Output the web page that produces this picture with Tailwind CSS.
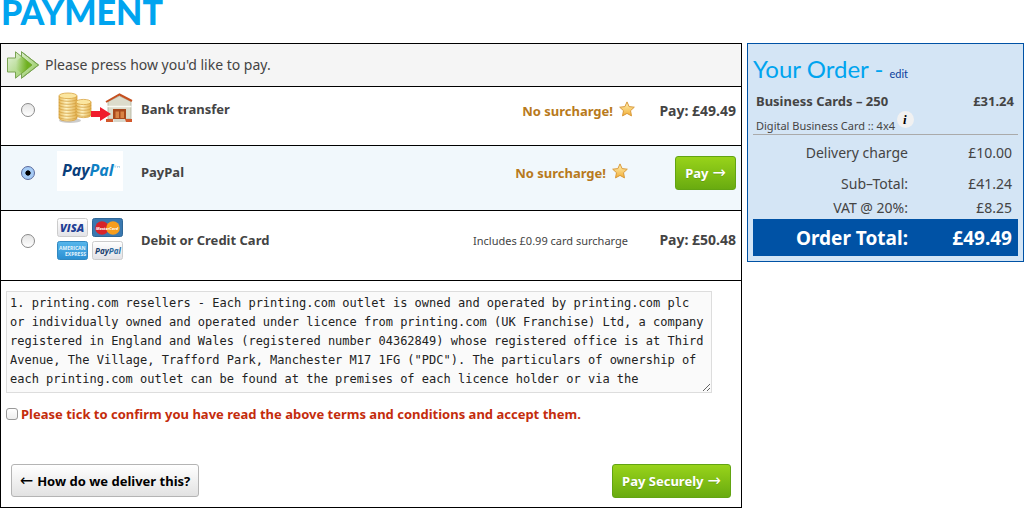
<!DOCTYPE html>
<html lang="en">
<head>
    <meta charset="UTF-8">
    <meta name="viewport" content="width=device-width, initial-scale=1.0">
    <title>Payment</title>
    <script src="https://cdn.jsdelivr.net/npm/@tailwindcss/browser@4"></script>
</head>
<body class="bg-white font-['Noto_Sans',sans-serif] text-[13px] leading-5 text-[#444]">
    <svg class="absolute w-0 h-0">
        <defs>
            <linearGradient id="gold" x1="0" y1="0" x2="0" y2="1">
                <stop offset="0" stop-color="#fff3b8"/>
                <stop offset="1" stop-color="#f2ae35"/>
            </linearGradient>
            <symbol id="star" viewBox="0 0 16 16">
                <path d="M8 .9l2.1 4.700 5.200.6-3.800 3.500 1 5.200L8 12.400l-4.500 2.500 1-5.200L.7 6.200l5.200-.6z" fill="url(#gold)" stroke="#d99a3c" stroke-width="1" stroke-linejoin="round"/>
            </symbol>
        </defs>
    </svg>

    <h1 class="h-[43px] pl-px text-[34px] leading-6 font-black text-[#00a4ef] font-['Lato',sans-serif]">PAYMENT</h1>

    <div class="flex items-start gap-[5px]">
        <form class="flex-1 border border-black">
            <div class="flex items-center h-[42px] pl-[6px] gap-[6px] bg-[#f5f5f5]">
                <svg class="w-8 h-7" viewBox="0 0 32 28">
                    <defs>
                        <linearGradient id="arrowA" x1="0" y1="0" x2="1" y2="1">
                            <stop offset="0" stop-color="#e6f3dc"/>
                            <stop offset="1" stop-color="#8cc653"/>
                        </linearGradient>
                        <linearGradient id="arrowB" x1="0" y1="0" x2="1" y2="0">
                            <stop offset="0" stop-color="#7ab82e" stop-opacity="0"/>
                            <stop offset=".7" stop-color="#6fb01f"/>
                        </linearGradient>
                    </defs>
                    <path d="M14.500 .8L31.500 14 14.500 27.200v-6h-5v-14h5z" fill="url(#arrowA)" stroke="#7aa353"/>
                    <path d="M.5 7h8V.8L25 14 8.500 27.200V21H.5z" fill="url(#arrowA)" stroke="#7aa353"/>
                    <path d="M9 10l6-4.500L25 14l-10 8.500L9 18z" fill="url(#arrowB)"/>
                    <path d="M14.500 5.500V.8L31.500 14 14.500 27.200v-4.700" fill="none" stroke="#7aa353"/>
                </svg>
                <span class="text-sm">Please press how you'd like to pay.</span>
            </div>

            <div class="flex items-start h-[59px] border-t border-black pl-5 pr-[5px]">
                <input type="radio" name="method" id="bank" class="appearance-none mt-4 w-[14px] h-[14px] rounded-full border border-[#8a8a8a] bg-linear-to-b from-[#e4e4e4] to-white">
                <label for="bank" class="flex flex-1 ml-[22px]">
                    <svg class="w-[77px] h-8 mt-[5px]" viewBox="0 0 77 32">
                        <defs>
                            <linearGradient id="coin" x1="0" x2="1">
                                <stop offset="0" stop-color="#e6b95a"/>
                                <stop offset=".4" stop-color="#fff4c4"/>
                                <stop offset="1" stop-color="#e2b04c"/>
                            </linearGradient>
                        </defs>
                        <ellipse cx="13" cy="28.500" rx="11" ry="2.500" fill="#ccc"/>
                        <path d="M2 4v22c0 4 18 4 18 0V4z" fill="url(#coin)" stroke="#d9a444" stroke-width=".8"/>
                        <path d="M2 7c0 3 18 3 18 0M2 10c0 3 18 3 18 0M2 13c0 3 18 3 18 0M2 16c0 3 18 3 18 0M2 19c0 3 18 3 18 0M2 22c0 3 18 3 18 0M2 25c0 3 18 3 18 0" fill="none" stroke="#d3a040" stroke-width=".8"/>
                        <ellipse cx="11" cy="3.800" rx="9" ry="2.800" fill="#fbe6a0" stroke="#d9a444" stroke-width=".8"/>
                        <path d="M19 10v13c0 3.500 15 3.500 15 0V10z" fill="url(#coin)" stroke="#d9a444" stroke-width=".8"/>
                        <path d="M19 13c0 3 15 3 15 0M19 16c0 3 15 3 15 0M19 19c0 3 15 3 15 0M19 22c0 3 15 3 15 0" fill="none" stroke="#d3a040" stroke-width=".8"/>
                        <ellipse cx="26.500" cy="10" rx="7.500" ry="2.600" fill="#fbe6a0" stroke="#d9a444" stroke-width=".8"/>
                        <path d="M51 9.500L62.500 4 74 9.500V27H51z" fill="#dcdccb" stroke="#aeae9c" stroke-width=".8"/>
                        <path d="M49.500 14.500h25" stroke="#fafaf2" stroke-width="1.500"/>
                        <path d="M49 10l13.500-7.500L75 9" fill="none" stroke="#c5501f" stroke-width="2"/>
                        <path d="M49 27h7v3h-7zM68 27h7v3h-7z" fill="#d2582c"/>
                        <path d="M56 17h13v10H56z" fill="#a8481c"/>
                        <path d="M58.500 19.500h3.500v6.500h-3.500zM63.500 19.500h3.500v6.500h-3.500z" fill="#d98345"/>
                        <path d="M57 27h11l1 3H56z" fill="#d8d8cc"/>
                        <path d="M34 19h9v-4l11 7-11 7v-4h-9z" fill="#f01c2c"/>
                    </svg>
                    <span class="mt-3 ml-[7px] font-bold">Bank transfer</span>
                </label>
                <span class="flex items-start gap-[6px] mt-[14px] font-bold text-[#b87a1c]">No surcharge! <svg class="w-4 h-4"><use href="#star"/></svg></span>
                <span class="w-[101px] mt-[14px] text-right text-sm leading-5 font-bold">Pay: £49.49</span>
            </div>

            <div class="flex items-start h-[65px] border-t border-black pl-5 pr-[5px] bg-[#f1f8fc]">
                <input type="radio" name="method" id="paypal" checked class="appearance-none mt-5 w-[14px] h-[14px] rounded-full border border-[#5a6a9c] bg-radial from-black from-25% to-[#a5cbf5] to-35%">
                <label for="paypal" class="flex flex-1 ml-[22px]">
                    <svg class="w-[66px] h-10 mt-[5px] bg-white font-['Open_Sans',sans-serif]" viewBox="0 0 66 40">
                        <text x="5" y="25" font-size="16" font-weight="700" font-style="italic" fill="#0a3f7c">Pay<tspan fill="#0f80c4">Pal</tspan></text>
                        <path d="M57 15h2.500M58.200 15v2M60.500 17v-2l1 1 1-1v2" fill="none" stroke="#7fb8dd" stroke-width=".5"/>
                    </svg>
                    <span class="mt-4 ml-[18px] font-bold">PayPal</span>
                </label>
                <span class="flex items-start gap-[6px] mt-[17px] font-bold text-[#b87a1c]">No surcharge! <svg class="w-4 h-4"><use href="#star"/></svg></span>
                <span class="flex justify-end w-[108px] mt-[10px]">
                    <button type="button" class="flex items-center justify-center gap-1 w-[61px] h-[34px] rounded-[3px] border border-[#62a412] bg-linear-to-b from-[#98d31a] to-[#69ab10] font-bold text-white text-shadow-2xs whitespace-nowrap">Pay <span class="font-['DejaVu_Sans',sans-serif] text-base font-normal">→</span></button>
                </span>
            </div>

            <div class="flex items-start h-[70px] border-t border-black pl-5 pr-[5px]">
                <input type="radio" name="method" id="card" class="appearance-none mt-[23px] w-[14px] h-[14px] rounded-full border border-[#8a8a8a] bg-linear-to-b from-[#e4e4e4] to-white">
                <label for="card" class="flex flex-1 ml-[22px]">
                    <svg class="w-[66px] h-[43px] mt-[7px] font-['Open_Sans',sans-serif]" viewBox="0 0 66 43">
                        <defs>
                            <linearGradient id="plain" x1="0" y1="0" x2="0" y2="1">
                                <stop offset="0" stop-color="#fff"/>
                                <stop offset="1" stop-color="#e2e2e6"/>
                            </linearGradient>
                            <linearGradient id="amex" x1="0" y1="0" x2="0" y2="1">
                                <stop offset="0" stop-color="#56b6ec"/>
                                <stop offset="1" stop-color="#2a8fd2"/>
                            </linearGradient>
                        </defs>
                        <rect x=".5" y=".5" width="30" height="18" rx="2" fill="url(#plain)" stroke="#ccc"/>
                        <text x="3" y="14" font-size="11" font-weight="800" font-style="italic" fill="#1f3f95">VISA</text>
                        <rect x="35.500" y=".5" width="30" height="18" rx="2" fill="#3a78b0" stroke="#2f6797"/>
                        <circle cx="45" cy="10" r="6.800" fill="#d8232a"/>
                        <circle cx="56" cy="10" r="6.800" fill="#f79d1c"/>
                        <text x="39" y="12" font-size="4" font-weight="700" font-style="italic" fill="#fff">MasterCard</text>
                        <rect x=".5" y="23.500" width="30" height="18" rx="2" fill="url(#amex)" stroke="#3188c0"/>
                        <text x="2" y="32" font-size="5" font-weight="700" fill="#e4f4fd">AMERICAN</text>
                        <text x="8" y="38" font-size="5" font-weight="700" fill="#e4f4fd">EXPRESS</text>
                        <rect x="35.500" y="23.500" width="30" height="18" rx="2" fill="url(#plain)" stroke="#ccc"/>
                        <text x="38" y="36" font-size="8" font-weight="700" font-style="italic" fill="#183d6b">Pay<tspan fill="#2a6a9e">Pal</tspan></text>
                    </svg>
                    <span class="mt-[19px] ml-[18px] font-bold">Debit or Credit Card</span>
                </label>
                <span class="mt-5 text-[11px]">Includes £0.99 card surcharge</span>
                <span class="w-[108px] mt-[19px] text-right text-sm leading-5 font-bold">Pay: £50.48</span>
            </div>

            <div class="border-t border-black pt-[10px] pl-[5px] pr-[10px] pb-[9px]">
                <textarea aria-label="Terms and conditions" class="block w-[706px] max-w-full h-[102px] border border-[#ddd] bg-[#fafafa] px-[3px] py-[2px] font-['DejaVu_Sans_Mono',monospace] text-xs leading-[19px] text-[#222] overflow-hidden resize">1. printing.com resellers - Each printing.com outlet is owned and operated by printing.com plc or individually owned and operated under licence from printing.com (UK Franchise) Ltd, a company registered in England and Wales (registered number 04362849) whose registered office is at Third Avenue, The Village, Trafford Park, Manchester M17 1FG ("PDC"). The particulars of ownership of each printing.com outlet can be found at the premises of each licence holder or via the</textarea>
                <div class="flex items-center gap-[3px] mt-[11px]">
                    <input type="checkbox" id="terms" class="appearance-none w-3 h-3 rounded-[3px] border border-[#999] bg-linear-to-b from-white to-[#eee]">
                    <label for="terms" class="font-bold text-[#c42c0c]">Please tick to confirm you have read the above terms and conditions and accept them.</label>
                </div>
                <div class="flex justify-between mt-10 pl-[5px]">
                    <button type="button" class="flex items-center justify-center gap-1 w-[188px] h-[33px] rounded-[3px] border border-[#b4b4b4] bg-linear-to-b from-white to-[#e2e2e2] font-bold text-black whitespace-nowrap"><span class="font-['DejaVu_Sans',sans-serif] text-base font-normal">←</span> How do we deliver this?</button>
                    <button type="submit" class="flex items-center justify-center gap-1 w-[119px] h-[34px] rounded-[3px] border border-[#62a412] bg-linear-to-b from-[#98d31a] to-[#69ab10] font-bold text-white text-shadow-2xs whitespace-nowrap">Pay Securely <span class="font-['DejaVu_Sans',sans-serif] text-base font-normal">→</span></button>
                </div>
            </div>
        </form>

        <div class="w-[277px] border border-[#0052a5] bg-[#d4e5f5] p-[5px]">
            <h2 class="mt-[5px] text-2xl leading-[30px] text-[#00a4ef] font-['Lato',sans-serif]">Your Order - <a href="#" class="text-[11px] text-[#0a3f9c]">edit</a></h2>
            <div class="flex justify-between mt-[2px] pl-[3px] pr-1 font-bold">
                <span>Business Cards – 250</span>
                <span>£31.24</span>
            </div>
            <div class="flex items-center gap-[2px] h-6 pl-[3px] border-b border-[#aaa] text-[11px]">
                <span class="mt-[6px]">Digital Business Card :: 4x4</span>
                <svg class="w-[17px] h-[17px] mb-[6px] font-['Liberation_Serif',serif]" viewBox="0 0 17 17">
                    <circle cx="8.500" cy="8.500" r="8.500" fill="#f1f1f1"/>
                    <text x="6" y="13" font-size="13" font-weight="bold" font-style="italic" fill="#000">i</text>
                </svg>
            </div>
            <table class="w-full text-right text-sm leading-5">
                <tr class="h-9"><td class="w-[155px]">Delivery charge</td><td class="pr-[6px]">£10.00</td></tr>
                <tr class="h-[26px]"><td>Sub–Total:</td><td class="pr-[6px]">£41.24</td></tr>
                <tr class="h-[22px]"><td>VAT @ 20%:</td><td class="pr-[6px]">£8.25</td></tr>
                <tr class="h-[37px] bg-[#0052a5] text-[19px] font-bold text-white"><td>Order Total:</td><td class="pr-[6px]">£49.49</td></tr>
            </table>
        </div>
    </div>
</body>
</html>
